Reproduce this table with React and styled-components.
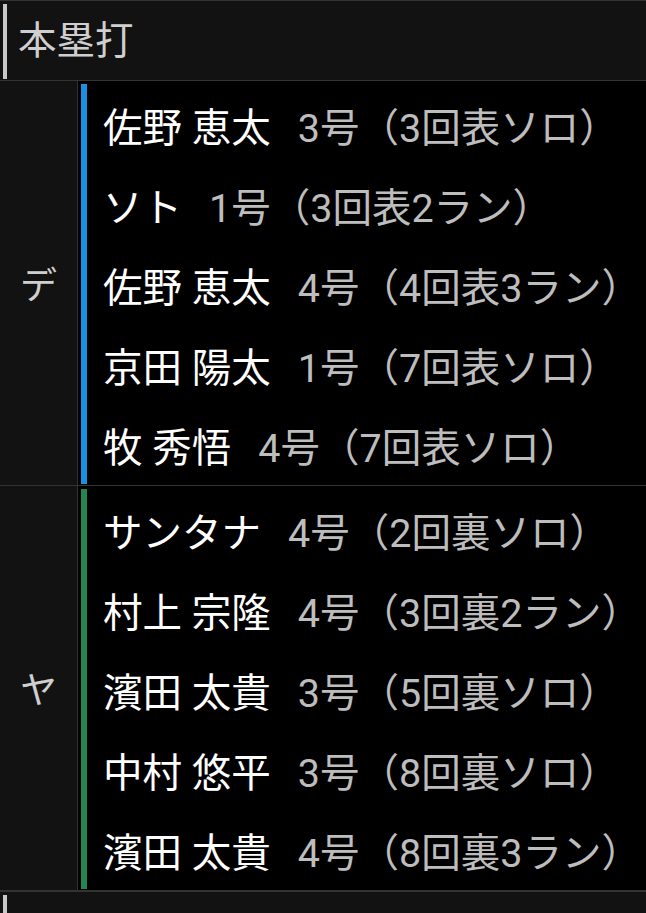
import styled, { createGlobalStyle } from 'styled-components'

const Global = createGlobalStyle`
  html, body {
    margin: 0;
    padding: 0;
    background: #000;
    overflow: hidden;
  }
  body {
    font-family: Roboto, "Noto Sans CJK JP", sans-serif;
  }
`

const Page = styled.div`
  width: 646px;
  height: 913px;
  overflow: hidden;
  background: #000;
`

const Header = styled.div`
  background: #121212;
  border-top: 1px solid #333;
  border-bottom: 1px solid #333;
  padding: 3px 0 1px 3px;
`

const HeaderBar = styled.div`
  height: 75px;
  border-left: 4px solid #c8c8c8;
  padding-left: 11px;
  display: flex;
  align-items: center;
  color: #cfcfcf;
  font-size: 38.5px;
  line-height: 1;
`

const TeamBlock = styled.div`
  display: flex;
  border-bottom: 1px solid #333;
`

const TeamLabel = styled.div`
  width: 77px;
  flex: none;
  background: #121212;
  border-right: 1px solid #333;
  display: flex;
  align-items: center;
  justify-content: center;
  color: #cfcfcf;
  font-size: 37px;
`

const Rows = styled.div`
  flex: 1;
  padding: 3px 0 1px 3px;
`

const RowsBar = styled.div`
  border-left: 6px solid ${p => p.$color};
`

const Row = styled.div`
  height: 80px;
  display: flex;
  align-items: center;
  padding-left: 16px;
  font-size: 39.5px;
  white-space: nowrap;
`

const Name = styled.span`
  color: #fff;
`

const Detail = styled.span`
  color: #bdbdbd;
  margin-left: 27px;
`

const teams = [
  {
    label: 'デ',
    color: '#1b90e0',
    rows: [
      ['佐野 恵太', '3号（3回表ソロ）'],
      ['ソト', '1号（3回表2ラン）'],
      ['佐野 恵太', '4号（4回表3ラン）'],
      ['京田 陽太', '1号（7回表ソロ）'],
      ['牧 秀悟', '4号（7回表ソロ）'],
    ],
  },
  {
    label: 'ヤ',
    color: '#25844f',
    rows: [
      ['サンタナ', '4号（2回裏ソロ）'],
      ['村上 宗隆', '4号（3回裏2ラン）'],
      ['濱田 太貴', '3号（5回裏ソロ）'],
      ['中村 悠平', '3号（8回裏ソロ）'],
      ['濱田 太貴', '4号（8回裏3ラン）'],
    ],
  },
]

function App() {
  return (
    <Page>
      <Global />
      <Header>
        <HeaderBar>本塁打</HeaderBar>
      </Header>
      {teams.map(t => (
        <TeamBlock key={t.label}>
          <TeamLabel>{t.label}</TeamLabel>
          <Rows>
            <RowsBar $color={t.color}>
              {t.rows.map(([name, detail], i) => (
                <Row key={i}>
                  <Name>{name}</Name>
                  <Detail>{detail}</Detail>
                </Row>
              ))}
            </RowsBar>
          </Rows>
        </TeamBlock>
      ))}
      <Header>
        <HeaderBar />
      </Header>
    </Page>
  )
}

export default App
